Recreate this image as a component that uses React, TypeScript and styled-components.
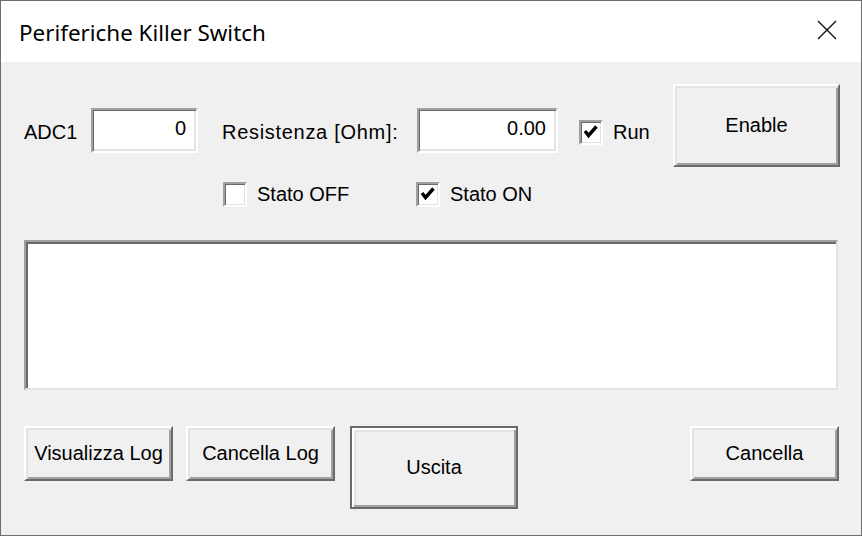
import React from "react";
import styled, { createGlobalStyle } from "styled-components";

const Global = createGlobalStyle`
  html, body { margin: 0; padding: 0; background: #f0f0f0; }
  * { box-sizing: border-box; }
`;

const Window = styled.div`
  width: 862px;
  height: 536px;
  border: 1px solid #6d6d6d;
  background: #f0f0f0;
  display: flex;
  flex-direction: column;
  font-family: "Liberation Sans", Arial, sans-serif;
  font-size: 20px;
  color: #000;
`;

const TitleBar = styled.div`
  height: 61px;
  flex-shrink: 0;
  background: #fff;
  display: flex;
  align-items: flex-start;
  padding-left: 18px;
`;

const Title = styled.div`
  flex: 1;
  margin-top: 17px;
  font-family: "Noto Sans", "Open Sans", sans-serif;
  font-size: 22.4px;
  line-height: 30px;
  color: #000;
`;

const CloseButton = styled.div`
  width: 20px;
  height: 20px;
  margin-top: 19px;
  margin-right: 24px;
  display: flex;
`;

const Body = styled.div`
  flex: 1;
  display: flex;
  flex-direction: column;
  padding: 22px 21px 0 23px;
`;

const TopSection = styled.div`
  display: flex;
  align-items: flex-start;
`;

const LeftColumn = styled.div`
  display: flex;
  flex-direction: column;
`;

const RowA = styled.div`
  display: flex;
  align-items: flex-start;
  margin-top: 24px;
  height: 45px;
`;

const RowB = styled.div`
  display: flex;
  align-items: flex-start;
  margin-top: 29px;
  padding-left: 199px;
`;

const Label = styled.div<{ $w: number; $ml?: number; $ls?: number }>`
  width: ${(p) => p.$w}px;
  margin-left: ${(p) => p.$ml ?? 0}px;
  padding-top: 13px;
  line-height: 23px;
  letter-spacing: ${(p) => p.$ls ?? 0}px;
  white-space: nowrap;
`;

const TextBox = styled.div<{ $w: number }>`
  width: ${(p) => p.$w}px;
  height: 45px;
  background: #fff;
  border-style: solid;
  border-width: 2px;
  border-color: #a0a0a0 #fff #fff #a0a0a0;
  box-shadow: inset 1px 1px #6a6a6a, inset -2px -2px #e3e3e3;
  padding: 7px 10px 0 0;
  text-align: right;
  line-height: 23px;
`;

const CheckItem = styled.div<{ $w?: number; $ml?: number; $mt?: number }>`
  display: flex;
  align-items: center;
  gap: 10px;
  width: ${(p) => (p.$w ? `${p.$w}px` : "auto")};
  margin-left: ${(p) => p.$ml ?? 0}px;
  margin-top: ${(p) => p.$mt ?? 0}px;
  line-height: 23px;
`;

const Box = styled.div`
  width: 24px;
  height: 25px;
  flex-shrink: 0;
  background: #fff;
  border-style: solid;
  border-width: 2px;
  border-color: #a0a0a0 #fff #fff #a0a0a0;
  box-shadow: inset 1px 1px #6a6a6a, inset -1px -1px #e3e3e3;
  display: flex;
  align-items: center;
  justify-content: center;
`;

const Button = styled.div<{ $w: number; $h: number; $ml?: number; $default?: boolean }>`
  width: ${(p) => p.$w}px;
  height: ${(p) => p.$h}px;
  margin-left: ${(p) => p.$ml ?? 0}px;
  flex-shrink: 0;
  background: #f0f0f0;
  display: flex;
  align-items: center;
  justify-content: center;
  line-height: 23px;
  white-space: nowrap;
  border-style: solid;
  border-width: 2px;
  border-color: ${(p) =>
    p.$default ? "#6a6a6a" : "#fff #6a6a6a #6a6a6a #fff"};
  box-shadow: ${(p) =>
    p.$default
      ? "inset 2px 2px #fff, inset -2px -2px #a0a0a0, inset 4px 4px #e3e3e3"
      : "inset 2px 2px #e3e3e3, inset -2px -2px #a0a0a0"};
`;

const EnableButton = styled(Button)`
  margin-left: auto;
`;

const ListBox = styled.div`
  margin-top: 33px;
  width: 814px;
  height: 150px;
  background: #fff;
  border-style: solid;
  border-width: 2px;
  border-color: #a0a0a0 #e3e3e3 #e3e3e3 #a0a0a0;
  box-shadow: inset 2px 2px #6a6a6a;
`;

const BottomRow = styled.div`
  display: flex;
  align-items: flex-start;
  margin-top: 36px;
  padding-right: 1px;
`;

const Spacer = styled.div`
  flex: 1;
`;

const Check = () => (
  <svg width="20" height="21" viewBox="0 0 20 21">
    <polyline
      points="4,9 7.5,13.5 15.5,4.5"
      fill="none"
      stroke="#000"
      strokeWidth="3.4"
      strokeLinecap="butt"
      strokeLinejoin="miter"
    />
  </svg>
);

function CheckBox({ checked }: { checked: boolean }) {
  return <Box>{checked && <Check />}</Box>;
}

export default function App() {
  return (
    <>
      <Global />
      <Window>
        <TitleBar>
          <Title>Periferiche Killer Switch</Title>
          <CloseButton>
            <svg width="20" height="20" viewBox="0 0 20 20">
              <path d="M1 1 L19 19 M19 1 L1 19" stroke="#111" strokeWidth="1.4" fill="none" />
            </svg>
          </CloseButton>
        </TitleBar>
        <Body>
          <TopSection>
            <LeftColumn>
              <RowA>
                <Label $w={67}>ADC1</Label>
                <TextBox $w={107}>0</TextBox>
                <Label $w={195} $ml={24} $ls={0.7}>Resistenza [Ohm]:</Label>
                <TextBox $w={141}>0.00</TextBox>
                <CheckItem $ml={21} $mt={12}>
                  <CheckBox checked />
                  <span>Run</span>
                </CheckItem>
              </RowA>
              <RowB>
                <CheckItem $w={193}>
                  <CheckBox checked={false} />
                  <span>Stato OFF</span>
                </CheckItem>
                <CheckItem>
                  <CheckBox checked />
                  <span>Stato ON</span>
                </CheckItem>
              </RowB>
            </LeftColumn>
            <EnableButton $w={167} $h={83}>Enable</EnableButton>
          </TopSection>
          <ListBox />
          <BottomRow>
            <Button $w={149} $h={55}>Visualizza Log</Button>
            <Button $w={149} $h={55} $ml={13}>Cancella Log</Button>
            <Button $w={168} $h={83} $ml={15} $default>Uscita</Button>
            <Spacer />
            <Button $w={149} $h={55}>Cancella</Button>
          </BottomRow>
        </Body>
      </Window>
    </>
  );
}
